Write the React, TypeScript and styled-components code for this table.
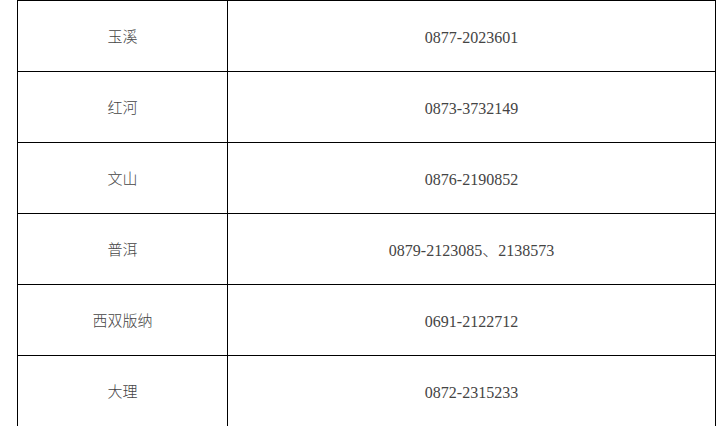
import React from "react";
import styled, { createGlobalStyle } from "styled-components";

const GlobalStyle = createGlobalStyle`
  html, body {
    margin: 0;
    padding: 0;
    background: #ffffff;
  }
  body {
    font-family: "Liberation Serif", "Noto Sans CJK SC", serif;
    color: #333333;
    overflow: hidden;
  }
`;

const Page = styled.div`
  padding-left: 17px;
`;

const Table = styled.table`
  border-collapse: collapse;
  table-layout: fixed;
  width: 699px;
`;

const Row = styled.tr`
  height: 71px;
`;

const Cell = styled.td<{ $kind: "name" | "phone" }>`
  border: 1px solid #000000;
  padding: ${(p) => (p.$kind === "name" ? "0 0 1px 0" : "3px 0 0 0")};
  text-align: center;
  vertical-align: middle;
  box-sizing: border-box;
  width: ${(p) => (p.$kind === "name" ? "210px" : "auto")};
  font-family: ${(p) =>
    p.$kind === "name"
      ? `"Noto Sans CJK SC", sans-serif`
      : `"Liberation Serif", "Noto Sans CJK SC", serif`};
  font-size: ${(p) => (p.$kind === "name" ? "15px" : "16px")};
  font-weight: 300;
  color: #444444;
  line-height: 1;
`;

const rows: [string, string][] = [
  ["玉溪", "0877-2023601"],
  ["红河", "0873-3732149"],
  ["文山", "0876-2190852"],
  ["普洱", "0879-2123085、2138573"],
  ["西双版纳", "0691-2122712"],
  ["大理", "0872-2315233"],
];

export default function App() {
  return (
    <Page>
      <GlobalStyle />
      <Table>
        <tbody>
          {rows.map(([name, phone]) => (
            <Row key={name}>
              <Cell $kind="name">{name}</Cell>
              <Cell $kind="phone">{phone}</Cell>
            </Row>
          ))}
        </tbody>
      </Table>
    </Page>
  );
}
